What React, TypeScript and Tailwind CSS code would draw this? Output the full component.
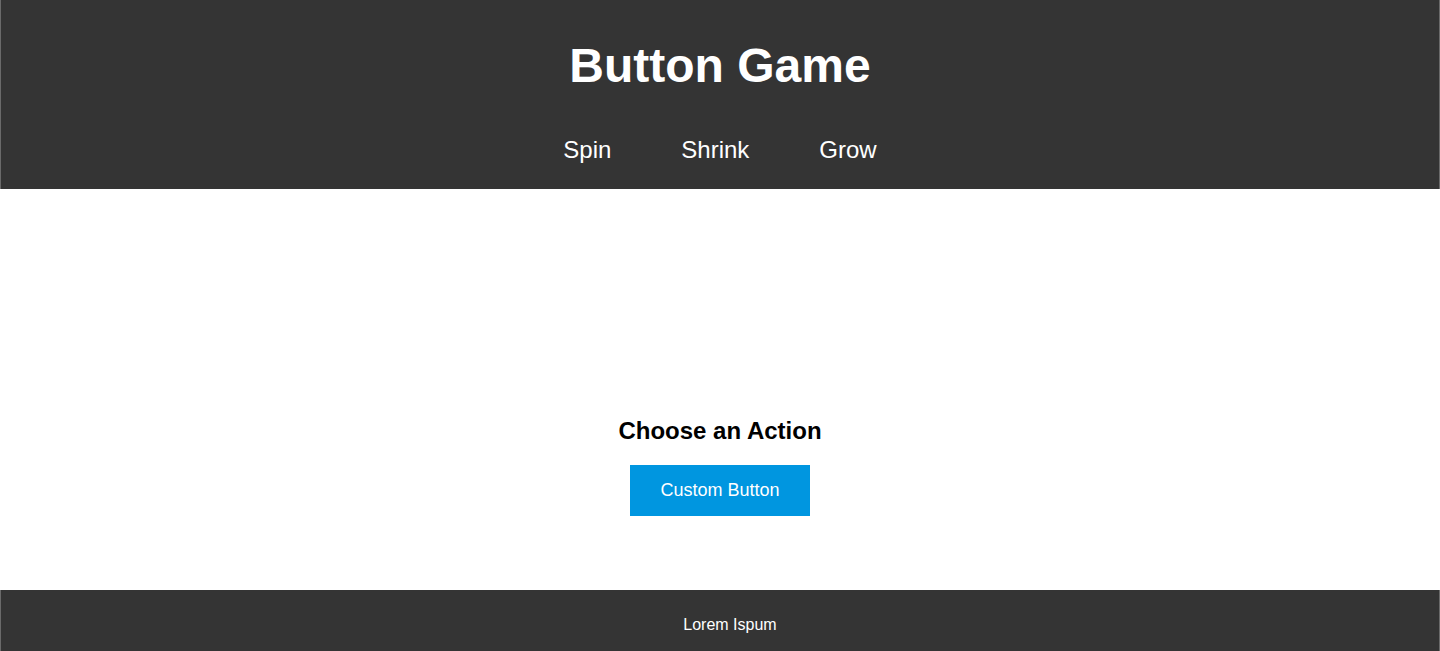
export default function App() {
  const links = ["Spin", "Shrink", "Grow"];

  return (
    <div className="flex flex-col min-h-[651px] bg-white font-['Liberation_Sans',Arial,sans-serif]">
      {/* Header */}
      <header className="h-[189px] bg-[#343434] border-x border-[#6a6a6a] text-white flex flex-col items-center pt-[38px]">
        <h1 className="text-[48px] leading-[55px] font-bold">Button Game</h1>
        <nav className="flex mt-[43px]">
          {links.map((l) => (
            <a key={l} href="#" className="px-[35px] text-[24px] leading-[28px] text-white">
              {l}
            </a>
          ))}
        </nav>
      </header>

      {/* Main */}
      <main className="flex flex-col items-center pt-[228px] pb-[74px]">
        <h2 className="text-[24px] leading-[28px] font-bold text-black">Choose an Action</h2>
        <button className="mt-[20px] w-[180px] h-[51px] bg-[#0096e0] text-white text-[18px]">
          Custom Button
        </button>
      </main>

      {/* Footer */}
      <footer className="h-[61px] bg-[#343434] border-x border-[#6a6a6a] text-white flex justify-center pl-[20px] pt-[26px]">
        <span className="text-[16px] leading-[18px]">Lorem Ispum</span>
      </footer>
    </div>
  );
}
